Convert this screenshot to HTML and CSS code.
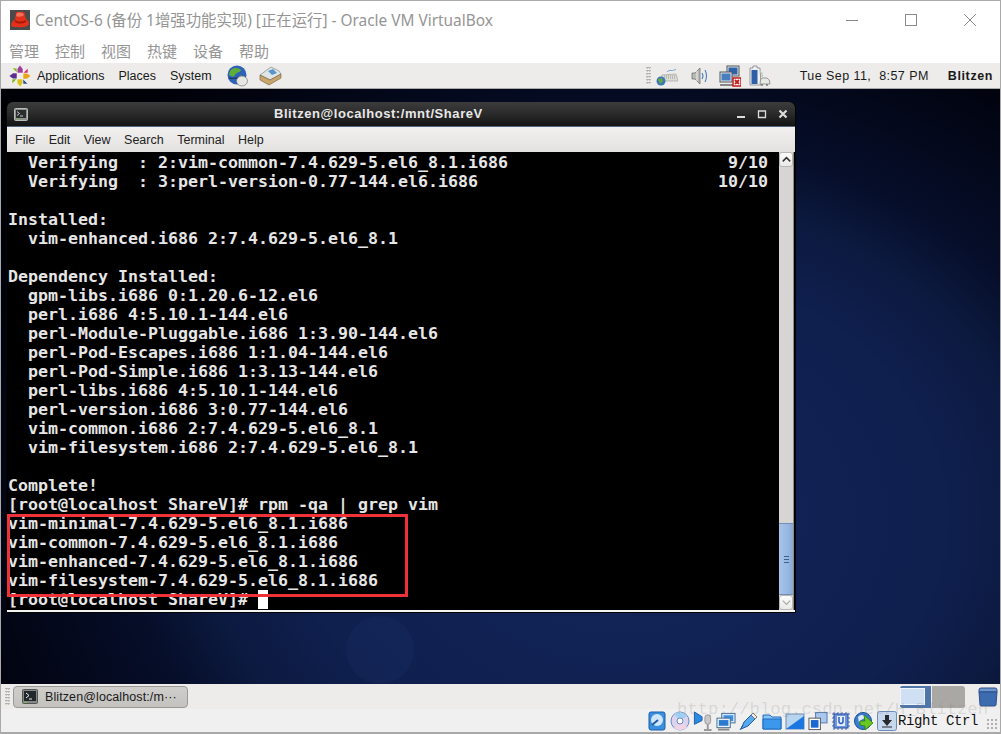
FILE: index.html
```html
<!DOCTYPE html>
<html lang="zh-CN">
<head>
<meta charset="utf-8">
<title>CentOS-6 - Oracle VM VirtualBox</title>
<link rel="stylesheet" href="styles.css">
</head>
<body>
<div class="vbox">
  <header class="titlebar">
    <svg class="app-icon" viewBox="0 0 20 20"><rect width="20" height="20" fill="#4a4a4a"/><path d="M1 15C2 11 4 10 5 10L6 3C7 1 9 2 11 2C14 1 15 3 15 6L16 9C18 10 19 12 19 13C19 17 12 18 7 17C4 17 1 17 1 15Z" fill="#e2321c"/><path d="M7 3C9 2 13 2 14 5C12 7 8 7 6 6Z" fill="#f4705a"/><path d="M5 10C8 12 12 12 16 10L16 12C12 14 8 14 5 12Z" fill="#a81608"/></svg>
    <span class="window-title">CentOS-6 (备份 1增强功能实现) [正在运行] - Oracle VM VirtualBox</span>
    <div class="win-controls">
      <svg viewBox="0 0 12 12" class="win-btn"><path d="M0 6.500H12" stroke="#8a8a8a"/></svg>
      <svg viewBox="0 0 12 12" class="win-btn"><rect x=".5" y=".5" width="11" height="11" fill="none" stroke="#8a8a8a"/></svg>
      <svg viewBox="0 0 12 12" class="win-btn"><path d="M0 0L12 12M12 0L0 12" stroke="#8a8a8a"/></svg>
    </div>
  </header>
  <nav class="vbox-menu"><span>管理</span><span>控制</span><span>视图</span><span>热键</span><span>设备</span><span>帮助</span></nav>

  <div class="guest">
    <div class="top-panel">
      <svg class="logo" viewBox="0 0 22 22"><g stroke="#fff" stroke-width=".5"><path d="M11 0L14 4V8H8V4Z" fill="#9c3f9a"/><path d="M22 11L18 14H14V8H18Z" fill="#e8a51e"/><path d="M11 22L8 18V14H14V18Z" fill="#d8c21c"/><path d="M0 11L4 8H8V14H4Z" fill="#5a2f8c"/><path d="M3 3H8V8Z" fill="#8fbb2b"/><path d="M19 3V8H14Z" fill="#d0337a"/><path d="M19 19H14V14Z" fill="#2b4d9c"/><path d="M3 19V14H8Z" fill="#7fb62a"/></g></svg>
      <span class="panel-item first">Applications</span>
      <span class="panel-item">Places</span>
      <span class="panel-item">System</span>
      <svg class="launcher globe" viewBox="0 0 22 22"><circle cx="10" cy="10" r="9.500" fill="#2e62b8"/><path d="M4 5C7 2 12 3 14 5C13 8 9 7 8 10C7 13 4 11 2 10C2 8 3 6 4 5ZM13 11C15 10 18 11 18 13L14 15Z" fill="#5cae38"/><path d="M2 13C6 14 12 13 16 11" stroke="#1c2c44" fill="none"/><ellipse cx="15" cy="16" rx="5.500" ry="5" fill="#e6e6e2" stroke="#666" stroke-width=".6"/></svg>
      <svg class="launcher mail" viewBox="0 0 23 20"><path d="M1 9L11 14L22 8L20 5L12 1Z" fill="#dfe6e6" stroke="#777" stroke-width=".6"/><path d="M9 5L14 3L18 7L13 9Z" fill="#5a94c8"/><path d="M1 9L11 14L22 8L22 12L10 19L1 14Z" fill="#c9a56c" stroke="#6e5a38" stroke-width=".6"/></svg>
      <div class="tray">
        <i class="handle"></i>
        <svg class="tray-icon" viewBox="0 0 22 20"><path d="M6 9L20 8L22 15H5Z" fill="#dcdcd6" stroke="#999" stroke-width=".6"/><path d="M8 10H19M8 12H20" stroke="#9a9a94" stroke-dasharray="1 1"/><path d="M11 6C13 3 17 6 20 3" stroke="#7b9fd0" fill="none"/><circle cx="5" cy="15" r="4.500" fill="#3a78b8"/><path d="M2 13L6 12L7 15L4 18Z" fill="#6aa83c"/></svg>
        <svg class="tray-icon speaker" viewBox="0 0 18 20"><path d="M1 7H4L9 2V18L4 13H1Z" fill="#b9b9b5" stroke="#666" stroke-width=".7"/><path d="M6 5V15" stroke="#eee"/><path d="M11 7Q13 10 11 13M14 4Q17 10 14 16" fill="none" stroke="#4c7ec0" stroke-width="1.100"/></svg>
        <svg class="tray-icon net" viewBox="0 0 22 22"><rect x="8" y="1" width="12" height="10" fill="#dfe6f0" stroke="#555"/><rect x="9.500" y="2.500" width="9" height="7" fill="#2f63a8"/><rect x="1" y="7" width="12" height="10" fill="#dfe6f0" stroke="#555"/><rect x="2.500" y="8.500" width="9" height="7" fill="#4a7cc0"/><path d="M1 20H14" stroke="#888" stroke-width="2"/><rect x="14" y="13" width="8" height="8" fill="#fff" stroke="#c81818" stroke-width="1.500"/><path d="M16 15L20 19M20 15L16 19" stroke="#c81818" stroke-width="1.800"/></svg>
        <svg class="tray-icon batt" viewBox="0 0 22 22"><path d="M1 3H4V1H8V3H11L12 20H1Z" fill="#eef0f2" stroke="#777" stroke-width=".7"/><rect x="2.500" y="5" width="6" height="14" fill="#2f5ea8"/><path d="M13 13H18Q21 14 21 19H11Q11 14 13 13Z" fill="#e8e8e4" stroke="#777" stroke-width=".7"/><path d="M13 19V21M18 19V21" stroke="#777" stroke-width="1.500"/><path d="M10 5L14 8V12H12V8Z" fill="#cfcfcb"/></svg>
      </div>
      <span class="clock">Tue Sep 11,&nbsp; 8:57 PM</span>
      <span class="user">Blitzen</span>
    </div>

    <main class="desktop">
      <div class="watermark-logo"></div>
      <section class="term-window">
        <div class="term-title">
          <svg class="term-icon" viewBox="0 0 14 13"><rect x=".5" y=".5" width="13" height="12" rx="1" fill="#8d9290" stroke="#bbb"/><rect x="2" y="2" width="10" height="8" fill="#2a2e2e"/><path d="M3 3.500L5.500 5.500L3 7.500M6 8H9" stroke="#eee" fill="none" stroke-width=".8"/><path d="M2 11H4" stroke="#7ec040"/></svg>
          <span class="term-name">Blitzen@localhost:/mnt/ShareV</span>
          <div class="term-controls">
            <svg viewBox="0 0 10 10"><rect x="1" y="7" width="8" height="2" fill="#dcdcdc"/></svg>
            <svg viewBox="0 0 10 10"><path d="M1.500 2H8.500V8.500H1.500Z" fill="none" stroke="#dcdcdc" stroke-width="1.300"/></svg>
            <svg viewBox="0 0 10 10"><path d="M1.500 1.500L8.500 8.500M8.500 1.500L1.500 8.500" stroke="#dcdcdc" stroke-width="2.200"/></svg>
          </div>
        </div>
        <nav class="term-menu"><span>File</span><span>Edit</span><span>View</span><span>Search</span><span>Terminal</span><span>Help</span></nav>
        <div class="term-body">
<pre class="screen">  Verifying  : 2:vim-common-7.4.629-5.el6_8.1.i686                      9/10
  Verifying  : 3:perl-version-0.77-144.el6.i686                        10/10

Installed:
  vim-enhanced.i686 2:7.4.629-5.el6_8.1

Dependency Installed:
  gpm-libs.i686 0:1.20.6-12.el6
  perl.i686 4:5.10.1-144.el6
  perl-Module-Pluggable.i686 1:3.90-144.el6
  perl-Pod-Escapes.i686 1:1.04-144.el6
  perl-Pod-Simple.i686 1:3.13-144.el6
  perl-libs.i686 4:5.10.1-144.el6
  perl-version.i686 3:0.77-144.el6
  vim-common.i686 2:7.4.629-5.el6_8.1
  vim-filesystem.i686 2:7.4.629-5.el6_8.1

Complete!
[root@localhost ShareV]# rpm -qa | grep vim
vim-minimal-7.4.629-5.el6_8.1.i686
vim-common-7.4.629-5.el6_8.1.i686
vim-enhanced-7.4.629-5.el6_8.1.i686
vim-filesystem-7.4.629-5.el6_8.1.i686
[root@localhost ShareV]# <span class="cursor"> </span></pre>
          <div class="scrollbar">
            <div class="sb-btn"><svg viewBox="0 0 14 14"><path d="M3 9L7 5L11 9" fill="none" stroke="#333" stroke-width="1.600"/></svg></div>
            <div class="sb-trough"></div>
            <div class="sb-thumb"><i></i><i></i><i></i></div>
            <div class="sb-btn"><svg viewBox="0 0 14 14"><path d="M3 5L7 9L11 5" fill="none" stroke="#a8a8a8" stroke-width="1.300"/></svg></div>
          </div>
        </div>
        <div class="term-foot"></div>
        <div class="highlight"></div>
      </section>
    </main>

    <div class="bottom-panel">
      <i class="handle"></i>
      <div class="task">
        <svg class="task-icon" viewBox="0 0 16 15"><rect x=".5" y=".5" width="15" height="14" rx="1" fill="#858a88" stroke="#555"/><rect x="2" y="2" width="12" height="10" fill="#23282a"/><path d="M4 4L7 6.500L4 9M7 10H10" stroke="#eee" fill="none"/><path d="M2 13.500H5" stroke="#7ec040"/></svg>
        <span>Blitzen@localhost:/m···</span>
      </div>
      <div class="pager"><div class="ws-active"><i></i></div><div class="ws-idle"></div></div>
      <svg class="trash" viewBox="0 0 20 20"><path d="M1 3Q1 1 3 1H17Q19 1 19 3V5H1Z" fill="#6a95cf" stroke="#2c4f86"/><path d="M1 5H19L18 18Q18 19 16 19H4Q2 19 2 18Z" fill="#3b6cb0" stroke="#2c4f86"/></svg>
    </div>
  </div>

  <footer class="statusbar">
    <div class="status-icons">
      <svg viewBox="0 0 18 20"><rect x="1" y="1" width="16" height="18" rx="2" fill="#3a90e0" stroke="#1c5ca8"/><circle cx="9" cy="9" r="6" fill="#cfe6fa"/><path d="M4 14L10 9" stroke="#1c5ca8" stroke-width="2"/></svg>
      <svg viewBox="0 0 20 20"><circle cx="10" cy="10" r="9" fill="#dcd4ee" stroke="#6a8cc4"/><path d="M10 10L4 3A9 9 0 0 1 17 5Z" fill="#9fd0f2"/><path d="M10 10L17 16A9 9 0 0 1 4 17Z" fill="#f0d4e8"/><circle cx="10" cy="10" r="3" fill="#fff" stroke="#6a8cc4"/></svg>
      <svg viewBox="0 0 20 21"><path d="M1 1L9 6V10L1 14Z" fill="#2c8ae0" stroke="#1c5ca8"/><rect x="12" y="4" width="6" height="10" rx="3" fill="#c8c8c8" stroke="#999"/><path d="M15 14V20M11 20H19" stroke="#999" stroke-width="2"/></svg>
      <svg viewBox="0 0 21 20"><rect x="6" y="2" width="14" height="10" fill="#cfe4fa" stroke="#4c6c90"/><rect x="8" y="4" width="10" height="6" fill="#3a90e0"/><rect x="1" y="7" width="14" height="10" fill="#e8f0fa" stroke="#4c6c90"/><rect x="3" y="9" width="10" height="6" fill="#2c7ad0"/><path d="M2 19H14" stroke="#888" stroke-width="2"/></svg>
      <svg viewBox="0 0 20 20"><path d="M2 18L5 11L12 4L16 8L9 15Z" fill="#58a8ee" stroke="#1c5ca8"/><path d="M12 4L14 2L18 6L16 8Z" fill="#eee" stroke="#777"/><path d="M1 19L4 14" stroke="#1c5ca8"/></svg>
      <svg viewBox="0 0 20 20"><path d="M1 4H8L10 6H19V18H1Z" fill="#8cc4f4" stroke="#1c6cc0"/><path d="M1 8H19V18H1Z" fill="#3c98ec" stroke="#1c6cc0"/></svg>
      <svg viewBox="0 0 20 20"><rect x="1" y="3" width="18" height="15" fill="#b8d4ee" stroke="#6c8cb0"/><path d="M1 18L19 5V18Z" fill="#1c78e0"/></svg>
      <svg viewBox="0 0 21 20"><rect x="8" y="1" width="12" height="11" fill="#a8c8f0" stroke="#5878a8"/><rect x="1" y="7" width="12" height="12" fill="#fff" stroke="#555"/><rect x="3" y="9" width="8" height="8" fill="#1c68d0"/></svg>
      <svg viewBox="0 0 20 20"><path d="M3 1V19M7 1V19M11 1V19M15 1V19M1 3H19M1 7H19M1 11H19M1 15H19" stroke="#4c6cc8" stroke-dasharray="2 2"/><rect x="3" y="3" width="14" height="14" fill="#6c96e0" stroke="#2c4c98"/><rect x="6" y="5" width="8" height="10" fill="#e4ecfb"/><path d="M8 6V11Q10 14 12 11V6" stroke="#2c5cc0" stroke-width="1.500" fill="none"/></svg>
      <svg viewBox="0 0 20 20"><circle cx="9" cy="10" r="8.500" fill="#3a7cd0" stroke="#1c5098"/><path d="M4 6C7 3 10 4 11 6C9 9 6 8 5 12Z" fill="#dceafa"/><path d="M10 4L19 12L11 19V15L6 14V10H11Z" fill="#6ac820" stroke="#2c8010" stroke-width=".8"/></svg>
      <svg viewBox="0 0 20 20"><rect x=".5" y=".5" width="19" height="19" rx="2" fill="#c6d8ee" stroke="#6c8cb8"/><path d="M8 4H12V9H15L10 15L5 9H8Z" fill="#2a2a2a"/><path d="M5 16H15" stroke="#2a2a2a"/></svg>
    </div>
    <span class="hostkey">Right Ctrl</span>
    <span class="watermark">http://blog.csdn.net/H_Blitzen</span>
    <i class="grip"></i>
  </footer>
</div>
</body>
</html>
```

FILE: styles.css
```css
* { box-sizing: border-box; }
html, body { margin: 0; height: 100%; }
body { background: #fff; overflow: hidden; }

.vbox {
  width: 1001px;
  height: 734px;
  display: flex;
  flex-direction: column;
  border: 1px solid #a9a9a9;
  border-bottom-width: 2px;
  background: #fff;
  position: relative;
}

.titlebar {
  height: 37px;
  display: flex;
  align-items: center;
  padding-left: 9px;
  flex: none;
}
.app-icon { width: 20px; height: 20px; margin-right: 5px; }
.window-title {
  font: 15.4px "Noto Sans", "Noto Sans CJK SC", sans-serif;
  color: #959595;
  white-space: nowrap;
}
.win-controls { margin-left: auto; display: flex; gap: 47px; padding-right: 24px; }
.win-btn { width: 12px; height: 12px; display: block; }

.vbox-menu {
  height: 25px;
  display: flex;
  gap: 16px;
  padding-left: 8px;
  align-items: center;
  flex: none;
  font: 15px "Noto Sans CJK SC", sans-serif;
  color: #959595;
}

.guest { flex: 1; display: flex; flex-direction: column; min-height: 0; }

.top-panel {
  height: 26px;
  flex: none;
  background: #edecea;
  border-bottom: 1px solid #aaa;
  display: flex;
  align-items: center;
  padding-left: 8px;
  font: 12.5px "Liberation Sans", sans-serif;
  color: #1a1a1a;
}
.logo { width: 22px; height: 22px; }
.panel-item { margin-left: 14px; }
.panel-item.first { margin-left: 6px; }
.launcher { display: block; }
.globe { width: 22px; height: 22px; margin-left: 15px; }
.mail { width: 23px; height: 20px; margin-left: 10px; }

.tray { margin-left: 364px; display: flex; align-items: center; height: 100%; }
.handle {
  display: block;
  width: 5px;
  height: 19px;
  background-image: radial-gradient(circle, #b5b3b0 1px, transparent 1px);
  background-size: 2.5px 3px;
  flex: none;
}
.tray-icon { width: 22px; height: 20px; margin-left: 5px; display: block; }
.speaker { width: 18px; margin-left: 13px; }
.net { height: 22px; margin-left: 10px; }
.batt { height: 22px; margin-left: 8px; }
.clock { margin-left: 29px; white-space: nowrap; letter-spacing: .45px; }
.user {
  margin-left: 19px;
  font: bold 12.5px "Liberation Sans", sans-serif;
  letter-spacing: .6px;
}

.desktop {
  flex: 1;
  position: relative;
  background: radial-gradient(ellipse 720px 560px at 62% 72%, #13255a 0%, #0f1f4e 45%, #0c1a40 58%, #060e2a 68%, #01030e 92%, #000007 100%);
}
.watermark-logo {
  position: absolute;
  left: 345px;
  top: 527px;
  width: 68px;
  height: 68px;
  border-radius: 50%;
  background: rgba(40,64,130,.12);
}

.term-window {
  position: absolute;
  left: 5px;
  top: 13px;
  width: 790px;
  height: 511px;
  background: #000;
  border: 1px solid #050505;
  border-top: 0;
  border-radius: 6px 6px 0 0;
  display: flex;
  flex-direction: column;
}
.term-title {
  height: 25px;
  flex: none;
  background: linear-gradient(#3c3c3c, #2e2e2e 40%, #141414);
  border-bottom: 1px solid #52677f;
  border-radius: 6px 6px 0 0;
  position: relative;
  display: flex;
  align-items: center;
  padding-left: 7px;
}
.term-icon { width: 14px; height: 13px; }
.term-name {
  position: absolute;
  left: 267px;
  top: 4px;
  font: bold 13px "Liberation Sans", sans-serif;
  letter-spacing: .56px;
  color: #e8e8e8;
  white-space: nowrap;
}
.term-controls {
  margin-left: auto;
  display: flex;
  gap: 11px;
  padding-right: 7px;
}
.term-controls svg { width: 10px; height: 10px; display: block; }

.term-menu {
  height: 25px;
  flex: none;
  background: linear-gradient(#f1f0ef, #e3e2e0);
  display: flex;
  align-items: center;
  padding-left: 8px;
  gap: 13.5px;
  font: 12.5px "Liberation Sans", sans-serif;
  color: #222;
}
.term-body { display: flex; height: 458px; flex: none; background: #000; }
.screen {
  margin: 0;
  width: 772px;
  padding: 1px 0 0 1px;
  font: bold 16.62px/19px "DejaVu Sans Mono", monospace;
  color: #e6e6e6;
  background: #000;
  overflow: hidden;
}
.cursor { background: #fff; display: inline-block; width: 10px; height: 19px; vertical-align: top; }

.scrollbar {
  width: 15px;
  flex: none;
  background: #d6d5d3;
  border-right: 1px solid #8c8b88;
  display: flex;
  flex-direction: column;
}
.sb-btn {
  height: 15px;
  flex: none;
  background: linear-gradient(#fbfbfb, #e9e9e7);
  border: 1px solid #b8b7b4;
  border-radius: 3px;
}
.sb-btn svg { display: block; width: 13px; height: 13px; }
.sb-trough { flex: 1; background: #d6d5d3; }
.sb-thumb {
  height: 72px;
  flex: none;
  background: linear-gradient(90deg, #a9c4e8, #95b5e0 70%, #85a8d6);
  border: 1px solid #6f8fba;
  border-width: 1px 0;
  display: flex;
  flex-direction: column;
  align-items: center;
  justify-content: center;
  gap: 2px;
}
.sb-thumb i { width: 5px; height: 1px; background: #40608c; display: block; }
.term-foot { flex: 1; background: #f3f3f2; }

.highlight {
  position: absolute;
  left: 0;
  top: 412px;
  width: 401px;
  height: 83px;
  border: 3px solid #ee3237;
}

.bottom-panel {
  height: 25px;
  flex: none;
  background: #edecea;
  display: flex;
  align-items: center;
  padding-left: 4px;
  font: 12.5px "Liberation Sans", sans-serif;
  color: #1a1a1a;
}
.task {
  width: 175px;
  height: 22px;
  margin-left: 3px;
  display: flex;
  align-items: center;
  gap: 7px;
  padding-left: 8px;
  letter-spacing: .1px;
  background: linear-gradient(#cfcecb, #c3c2be);
  border: 1px solid #9a9996;
  border-radius: 4px;
}
.task-icon { width: 16px; height: 15px; }
.pager {
  margin-left: 712px;
  width: 65px;
  height: 22px;
  display: flex;
  border-radius: 3px;
  overflow: hidden;
  background: #aaa8a5;
}
.ws-active { width: 32px; background: #4f76a8; padding: 2px 6px 3px 0; border-right: 1px solid #eee; }
.ws-active i { display: block; height: 100%; background: #cfe0f5; border: 1px solid #eef4fb; }
.ws-idle { flex: 1; }
.trash { width: 20px; height: 20px; margin-left: 13px; }

.statusbar {
  height: 23px;
  flex: none;
  background: #f0f0f0;
  display: flex;
  align-items: center;
  padding-left: 646px;
  position: relative;
}
.status-icons { display: flex; gap: 3px; align-items: center; }
.status-icons svg { width: 20px; height: 20px; display: block; }
.hostkey {
  margin-left: 1px;
  font: 14px "Liberation Mono", monospace;
  letter-spacing: -.4px;
  color: #111;
  white-space: nowrap;
}
.watermark {
  position: absolute;
  left: 676px;
  top: -9px;
  font: 17.3px "Liberation Mono", monospace;
  color: rgba(120,120,120,.2);
  white-space: nowrap;
}
.grip {
  position: absolute;
  right: 2px;
  bottom: 2px;
  width: 12px;
  height: 12px;
  background-image: radial-gradient(circle, #b0b0b0 1.3px, transparent 1.3px);
  background-size: 4px 4px;
}
```
